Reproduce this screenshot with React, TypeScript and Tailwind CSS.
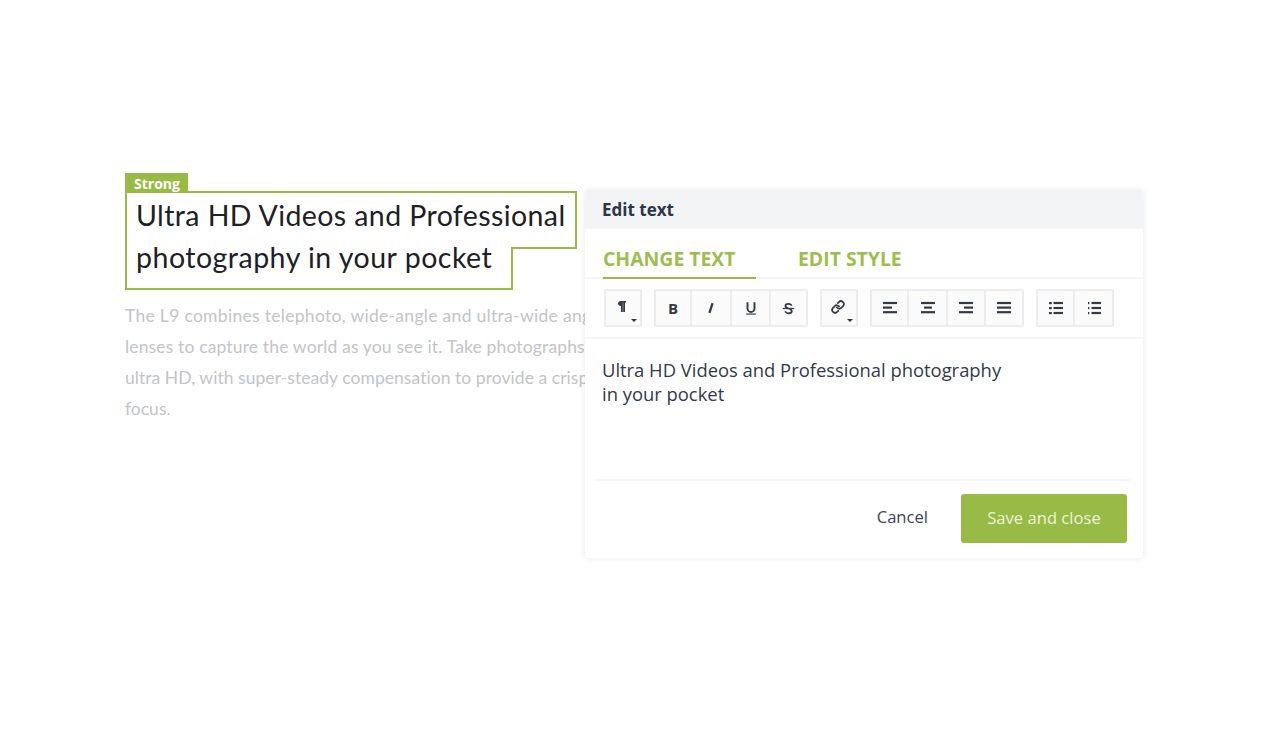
import React from "react";
import { Link } from "lucide-react";

const Caret = () => (
  <span className="absolute right-[3px] bottom-[3px] w-0 h-0 border-x-[3px] border-x-transparent border-t-[3px] border-t-[#2f3640]" />
);

const Lines = ({ rows }: { rows: [number, number][] }) => (
  <svg width="16" height="14" viewBox="0 0 16 14" fill="none" stroke="#333a44" strokeWidth="2.2">
    {rows.map(([a, b], i) => (
      <line key={i} x1={a} x2={b} y1={2 + i * 4.6} y2={2 + i * 4.6} />
    ))}
  </svg>
);

const Bullets = ({ faint }: { faint?: boolean }) => (
  <svg width="16" height="14" viewBox="0 0 16 14" fill="none">
    {[2, 7, 12].map((y) => (
      <g key={y}>
        <rect x={faint ? 2 : 1} y={y - 1} width={faint ? 1.3 : 2.8} height="2.2" fill="#333a44" />
        <line x1="5.5" x2="15" y1={y} y2={y} stroke="#333a44" strokeWidth="2.2" />
      </g>
    ))}
  </svg>
);

const Glyph = ({ size = 16, children }: { size?: number; children: React.ReactNode }) => (
  <svg width={size} height={size} viewBox="0 0 16 16" fill="none" stroke="#333a44" strokeWidth="2.2">
    {children}
  </svg>
);

const Btn = ({ w, children, last }: { w: string; children: React.ReactNode; last?: boolean }) => (
  <div className={`${w} relative h-full flex items-center justify-center text-[#333a44] ${last ? "" : "border-r-2 border-[#ececee]"}`}>
    {children}
  </div>
);

const Group = ({ className, children }: { className: string; children: React.ReactNode }) => (
  <div className={`${className} h-[38px] flex border-2 border-[#ececee] rounded-[2px] bg-[#fbfbfc]`}>{children}</div>
);

export default function App() {
  return (
    <div className="relative w-[1264px] h-[746px] bg-white overflow-hidden font-['Lato','Liberation_Sans',sans-serif]">
      <div className="pl-[125px] pt-[173px]">
        <div className="w-[63px] h-[18px] bg-[#97bb45] text-white text-[14px] font-bold leading-[22px] pl-[9px] font-['Open_Sans','Liberation_Sans',sans-serif]">Strong</div>
        <div className="w-[452px] h-[56px] border-2 border-b-0 border-[#97bb45] pl-[9px] text-[28.5px] leading-[45px] text-[#1d2024] tracking-[0.4px] whitespace-nowrap">
          Ultra HD Videos and Professional
        </div>
        <div className="w-[452px] flex">
          <div className="w-[388px] h-[43px] border-2 border-t-0 border-[#97bb45] pl-[9px] text-[28.5px] leading-[20px] text-[#1d2024] tracking-[0.5px] whitespace-nowrap">
            photography in your pocket
          </div>
          <div className="flex-1 border-t-2 border-[#97bb45] h-0" />
        </div>
        <div className="mt-[10px] w-[520px] text-[17.5px] leading-[31px] text-[#c2c4c7] whitespace-nowrap">
          <p className="tracking-[0.3px]">The L9 combines telephoto, wide-angle and ultra-wide angle</p>
          <p className="tracking-[0.15px]">lenses to capture the world as you see it. Take photographs in</p>
          <p className="tracking-[0.05px]">ultra HD, with super-steady compensation to provide a crisp</p>
          <p>focus.</p>
        </div>
      </div>

      <div className="absolute left-[585px] top-[190px] w-[558px] h-[368px] bg-white rounded-[3px] shadow-[0_0_6px_rgba(0,0,0,0.09)] flex flex-col font-['Open_Sans','Liberation_Sans',sans-serif]">
        <div className="h-[39px] bg-[#f3f4f6] rounded-t-[3px] pl-[17px] flex items-center text-[17px] font-bold text-[#2c3648]">Edit text</div>
        <div className="h-[50px] flex border-b-2 border-[#f5f5f6] pl-[18px]">
          <div className="w-[153px] h-[50px] border-b-2 border-[#97bb45] text-[19.4px] font-bold text-[#9dbe4f] leading-[59px] whitespace-nowrap">CHANGE TEXT</div>
          <div className="ml-[42px] text-[19.4px] font-bold text-[#9dbe4f] leading-[59px] whitespace-nowrap">EDIT STYLE</div>
        </div>
        <div className="h-[60px] flex items-start gap-3 pl-[19px] pt-[10px] border-b-2 border-[#f5f5f6]">
          <Group className="w-[38px]">
            <Btn w="w-full" last>
              <svg width="8" height="11" viewBox="0 0 8 11" fill="#333a44" className="-mt-[3px] -ml-[3px]">
                <path d="M0 2.500C0 1 1.200 0 3 0h5v1.500H7V11H5.200V1.500H4.800V11H3V5C1.200 5 0 4 0 2.500Z" />
              </svg>
              <Caret />
            </Btn>
          </Group>
          <Group className="w-[154px]">
            <Btn w="w-[36px]">
              <span className="text-[15px] font-bold leading-none">B</span>
            </Btn>
            <Btn w="w-[40px]">
              <Glyph size={14}><line x1="9.800" y1="2.500" x2="6.200" y2="13.500" strokeWidth="2.600" /></Glyph>
            </Btn>
            <Btn w="w-[39px]">
              <Glyph size={14}>
                <path d="M4 1.500v7a4 4 0 0 0 8 0v-7" />
                <line x1="2.500" y1="15" x2="13.500" y2="15" stroke="#7b808a" />
              </Glyph>
            </Btn>
            <Btn w="flex-1" last>
              <Glyph size={13}>
                <path d="M12 4.500C11 2.800 9.700 2.200 8 2.200 5.800 2.200 4.200 3.300 4.200 5c0 4 7.800 2 7.800 6 0 1.800-1.700 2.900-4 2.900-1.800 0-3.200-.7-4.200-2.400" />
                <line x1="1" y1="8" x2="15" y2="8" strokeWidth="1.500" />
              </Glyph>
            </Btn>
          </Group>
          <Group className="w-[38px]">
            <Btn w="w-full" last><Link size={14} strokeWidth={3} className="-mt-[2px] -ml-[3px]" /><Caret /></Btn>
          </Group>
          <Group className="w-[154px]">
            <Btn w="w-[37px]"><Lines rows={[[1, 15], [1, 10], [1, 15]]} /></Btn>
            <Btn w="w-[39px]"><Lines rows={[[1, 15], [4, 12], [1, 15]]} /></Btn>
            <Btn w="w-[38px]"><Lines rows={[[1, 15], [6, 15], [1, 15]]} /></Btn>
            <Btn w="flex-1" last><Lines rows={[[1, 15], [1, 15], [1, 15]]} /></Btn>
          </Group>
          <Group className="w-[78px]">
            <Btn w="w-[37px]"><Bullets /></Btn>
            <Btn w="flex-1" last><Bullets faint /></Btn>
          </Group>
        </div>
        <div className="h-[140px] pl-[17px] pt-[19px] text-[18.4px] leading-[24px] text-[#2f3a4c] whitespace-nowrap">
          <p>Ultra HD Videos and Professional photography</p>
          <p>in your pocket</p>
        </div>
        <div className="mx-[10px] mr-[13px] border-t-2 border-[#f7f7f8] flex-1 flex items-start justify-end pt-[13px] pr-[3px]">
          <span className="text-[16.6px] text-[#3d4450] mr-[33px] leading-[46px]">Cancel</span>
          <div className="w-[166px] h-[49px] bg-[#97bb45] rounded-[3px] flex items-center justify-center text-[16.6px] text-[#eef4dc]">Save and close</div>
        </div>
      </div>
    </div>
  );
}
